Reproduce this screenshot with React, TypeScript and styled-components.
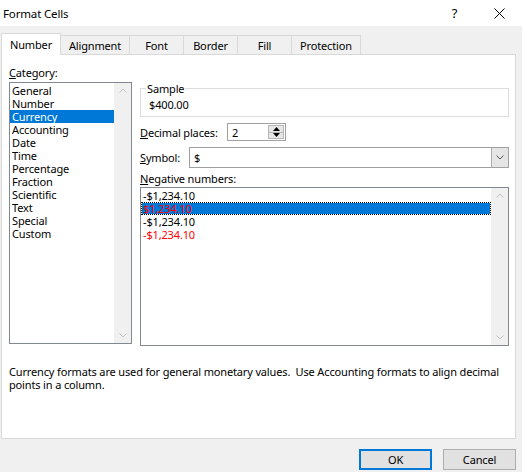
import styled, { createGlobalStyle } from "styled-components";

const GlobalStyle = createGlobalStyle`
  html, body {
    margin: 0;
    padding: 0;
    background: #f0f0f0;
  }
  body {
    font-family: "Noto Sans", "Liberation Sans", sans-serif;
    font-size: 11px;
    letter-spacing: -0.15px;
    color: #000;
  }
`;

const Window = styled.div`
  width: 522px;
  height: 472px;
  background: #f0f0f0;
  display: flex;
  flex-direction: column;
  overflow: hidden;
`;

const TitleBar = styled.div`
  height: 26px;
  background: #fff;
  display: flex;
  align-items: center;
  padding-left: 3px;
`;

const Title = styled.span`
  flex: 1;
  font-size: 11.5px;
  line-height: 13px;
`;

const TitleButton = styled.div`
  width: 45px;
  height: 26px;
  display: flex;
  align-items: center;
  justify-content: center;
  font-size: 13px;
`;

const TabStrip = styled.div`
  display: flex;
  align-items: flex-end;
  height: 21px;
  margin: 7px 0 0 1px;
`;

const Tab = styled.div<{ $active?: boolean; $w: number }>`
  position: relative;
  z-index: ${(p) => (p.$active ? 2 : 0)};
  box-sizing: border-box;
  width: ${(p) => p.$w}px;
  height: ${(p) => (p.$active ? 22 : 19)}px;
  margin-bottom: ${(p) => (p.$active ? -1 : 0)}px;
  margin-left: -1px;
  border: 1px solid #d9d9d9;
  border-bottom: none;
  background: ${(p) => (p.$active ? "#fff" : "#f0f0f0")};
  display: flex;
  align-items: center;
  justify-content: center;
  padding-top: ${(p) => (p.$active ? 0 : 1)}px;

  &:first-child {
    margin-left: 0;
  }
`;

const Panel = styled.div`
  box-sizing: border-box;
  width: 515px;
  height: 385px;
  margin-left: 1px;
  border: 1px solid #d9d9d9;
  background: #fff;
  padding: 11px 0 0 7px;
  display: grid;
  grid-template-columns: 123px 369px;
  column-gap: 8px;
  align-content: start;
`;

const Column = styled.div<{ $top?: number }>`
  display: flex;
  flex-direction: column;
  padding-top: ${(p) => p.$top ?? 0}px;
`;

const Label = styled.div<{ $mt?: number }>`
  line-height: 13px;
  margin-top: ${(p) => p.$mt ?? 0}px;
  white-space: nowrap;
`;

const ListBox = styled.div<{ $h: number; $mt?: number }>`
  box-sizing: border-box;
  height: ${(p) => p.$h}px;
  margin-top: ${(p) => p.$mt ?? 0}px;
  border: 1px solid #828790;
  background: #fff;
  display: flex;
`;

const ListItems = styled.div`
  flex: 1;
  padding: 1px 0 0 0;
`;

const ListRow = styled.div<{ $selected?: boolean; $red?: boolean; $focus?: boolean }>`
  height: 13px;
  line-height: 13px;
  padding-left: 2px;
  white-space: nowrap;
  background: ${(p) => (p.$selected ? "#0078d7" : "transparent")};
  color: ${(p) => (p.$red ? "#ff0000" : p.$selected ? "#fff" : "#000")};
  ${(p) =>
    p.$focus &&
    `
    box-shadow: inset 0 0 0 1px #fff;
    outline: 1px dotted #000;
    outline-offset: -1px;
  `}
`;

const ScrollTrack = styled.div`
  width: 17px;
  background: #f0f0f0;
  display: flex;
  flex-direction: column;
  justify-content: space-between;
  align-items: center;
  padding: 5px 0;
`;

const Fieldset = styled.fieldset`
  margin: 0;
  min-width: 0;
  border: 1px solid #dcdcdc;
  padding: 3px 8px 5px;
`;

const Legend = styled.legend`
  padding: 0 1px;
  margin-left: -3px;
  line-height: 13px;
`;

const SampleText = styled.div`
  line-height: 13px;
`;

const FieldRow = styled.div<{ $h: number; $mt: number; $lw: number }>`
  display: flex;
  align-items: center;
  height: ${(p) => p.$h}px;
  margin-top: ${(p) => p.$mt}px;

  > ${Label} {
    width: ${(p) => p.$lw}px;
  }
`;

const SpinBox = styled.div`
  box-sizing: border-box;
  width: 59px;
  height: 100%;
  border: 1px solid #a0a0a0;
  display: flex;
  align-items: stretch;
`;

const InputText = styled.div`
  flex: 1;
  padding-left: 4px;
  display: flex;
  align-items: center;
`;

const SpinButtons = styled.div`
  width: 16px;
  display: flex;
  flex-direction: column;
  margin: 1px;
`;

const SpinHalf = styled.div`
  flex: 1;
  background: #e6e6e6;
  border: 1px solid #b8b8b8;
  display: flex;
  align-items: center;
  justify-content: center;

  & + & {
    border-top: none;
  }
`;

const ComboBox = styled.div`
  box-sizing: border-box;
  width: 320px;
  height: 100%;
  border: 1px solid #a0a0a0;
  display: flex;
  background: #fff;
`;

const DropButton = styled.div`
  width: 16px;
  background: #e5e5e5;
  border-left: 1px solid #adadad;
  display: flex;
  align-items: center;
  justify-content: center;
`;

const Description = styled.div`
  grid-column: 1 / -1;
  margin-top: 19px;
  line-height: 13px;
  white-space: nowrap;
`;

const ButtonRow = styled.div`
  display: flex;
  justify-content: flex-end;
  gap: 11px;
  padding: 10px 6px 0 0;
`;

const DialogButton = styled.button<{ $default?: boolean }>`
  box-sizing: border-box;
  width: 73px;
  height: 21px;
  padding: 0;
  font: inherit;
  letter-spacing: inherit;
  color: #000;
  background: #e1e1e1;
  border: ${(p) => (p.$default ? "2px solid #0078d7" : "1px solid #adadad")};
`;

const Chevron = ({ up, color }: { up?: boolean; color: string }) => (
  <svg width="8" height="5" viewBox="0 0 8 5">
    <path
      d={up ? "M0.5 4.5 L4 1 L7.5 4.5" : "M0.5 0.5 L4 4 L7.5 0.5"}
      fill="none"
      stroke={color}
      strokeWidth="1"
    />
  </svg>
);

const Triangle = ({ up }: { up?: boolean }) => (
  <svg width="7" height="4" viewBox="0 0 7 4">
    <path d={up ? "M0 4 L3.5 0 L7 4 Z" : "M0 0 L3.5 4 L7 0 Z"} fill="#000" />
  </svg>
);

const categories = [
  "General",
  "Number",
  "Currency",
  "Accounting",
  "Date",
  "Time",
  "Percentage",
  "Fraction",
  "Scientific",
  "Text",
  "Special",
  "Custom",
];

const negatives = [
  { text: "-$1,234.10", red: false },
  { text: "$1,234.10", red: true, selected: true },
  { text: "-$1,234.10", red: false },
  { text: "-$1,234.10", red: true },
];

const tabs = [
  { name: "Number", w: 60 },
  { name: "Alignment", w: 70 },
  { name: "Font", w: 55 },
  { name: "Border", w: 55 },
  { name: "Fill", w: 55 },
  { name: "Protection", w: 70 },
];

export default function App() {
  return (
    <>
      <GlobalStyle />
      <Window>
        <TitleBar>
          <Title>Format Cells</Title>
          <TitleButton>?</TitleButton>
          <TitleButton>
            <svg width="11" height="11" viewBox="0 0 11 11">
              <path d="M0.5 0.5 L10.5 10.5 M10.5 0.5 L0.5 10.5" stroke="#000" strokeWidth="1" />
            </svg>
          </TitleButton>
        </TitleBar>

        <TabStrip>
          {tabs.map((t, i) => (
            <Tab key={t.name} $w={t.w} $active={i === 0}>
              {t.name}
            </Tab>
          ))}
        </TabStrip>

        <Panel>
          <Column>
            <Label>
              <u>C</u>ategory:
            </Label>
            <ListBox $h={262} $mt={3}>
              <ListItems>
                {categories.map((c) => (
                  <ListRow key={c} $selected={c === "Currency"}>
                    {c}
                  </ListRow>
                ))}
              </ListItems>
              <ScrollTrack>
                <Chevron up color="#c2c2c2" />
                <Chevron color="#c2c2c2" />
              </ScrollTrack>
            </ListBox>
          </Column>

          <Column $top={16}>
            <Fieldset>
              <Legend>Sample</Legend>
              <SampleText>$400.00</SampleText>
            </Fieldset>

            <FieldRow $h={18} $mt={6} $lw={87}>
              <Label>
                <u>D</u>ecimal places:
              </Label>
              <SpinBox>
                <InputText>2</InputText>
                <SpinButtons>
                  <SpinHalf>
                    <Triangle up />
                  </SpinHalf>
                  <SpinHalf>
                    <Triangle />
                  </SpinHalf>
                </SpinButtons>
              </SpinBox>
            </FieldRow>

            <FieldRow $h={21} $mt={6} $lw={49}>
              <Label>
                <u>S</u>ymbol:
              </Label>
              <ComboBox>
                <InputText>$</InputText>
                <DropButton>
                  <Chevron color="#555" />
                </DropButton>
              </ComboBox>
            </FieldRow>

            <Label $mt={4}>
              <u>N</u>egative numbers:
            </Label>
            <ListBox $h={159} $mt={2}>
              <ListItems>
                {negatives.map((n, i) => (
                  <ListRow key={i} $red={n.red} $selected={n.selected} $focus={n.selected}>
                    {n.text}
                  </ListRow>
                ))}
              </ListItems>
              <ScrollTrack>
                <Chevron up color="#c2c2c2" />
                <Chevron color="#c2c2c2" />
              </ScrollTrack>
            </ListBox>
          </Column>

          <Description>
            Currency formats are used for general monetary values.&nbsp; Use Accounting formats to align decimal
            <br />
            points in a column.
          </Description>
        </Panel>

        <ButtonRow>
          <DialogButton $default>OK</DialogButton>
          <DialogButton>Cancel</DialogButton>
        </ButtonRow>
      </Window>
    </>
  );
}
